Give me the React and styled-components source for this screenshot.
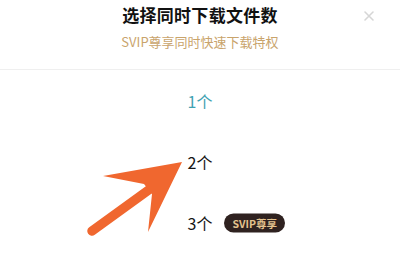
import React from 'react';
import styled, { createGlobalStyle } from 'styled-components';

const GlobalStyle = createGlobalStyle`
  html, body {
    margin: 0;
    padding: 0;
    background: #fff;
  }
  body {
    font-family: "Noto Sans CJK SC", "Noto Sans", sans-serif;
  }
`;

const Sheet = styled.div`
  position: relative;
  width: 400px;
  height: 262px;
  overflow: hidden;
  background: #fff;
`;

const Header = styled.header`
  height: 70px;
  box-sizing: border-box;
  border-bottom: 1px solid #efefef;
  display: flex;
  flex-direction: column;
  align-items: center;
  padding-top: 3px;
  position: relative;
`;

const Title = styled.h1`
  margin: 0;
  font-size: 17px;
  font-weight: 700;
  color: #111;
  line-height: 24px;
  letter-spacing: 0.3px;
`;

const Subtitle = styled.div`
  margin-top: 6px;
  font-size: 13px;
  color: #c9a46c;
  line-height: 18px;
`;

const Close = styled.span`
  position: absolute;
  top: 4px;
  right: 24px;
  width: 14px;
  height: 14px;
  color: #d6d6d6;
`;

const List = styled.ul`
  list-style: none;
  margin: 0;
  padding: 0;
`;

const Row = styled.li`
  height: 61px;
  display: flex;
  align-items: center;
  justify-content: center;
`;

const Count = styled.span`
  position: relative;
  font-size: 16px;
  line-height: 20px;
  color: ${p => (p.$active ? '#3fa2b2' : '#151515')};
`;

const Badge = styled.span`
  position: absolute;
  left: calc(100% + 12px);
  top: 50%;
  transform: translateY(-50%);
  height: 19px;
  padding: 0 8px;
  border-radius: 10px;
  background: #2f2220;
  color: #e4c38e;
  font-size: 10.5px;
  font-weight: 700;
  line-height: 19px;
  white-space: nowrap;
`;

const Arrow = styled.svg`
  position: absolute;
  left: 0;
  top: 0;
  pointer-events: none;
`;

export default function App() {
  const options = [
    { n: 1, active: true },
    { n: 2 },
    { n: 3, vip: true },
  ];
  return (
    <Sheet>
      <GlobalStyle />
      <Header>
        <Title>选择同时下载文件数</Title>
        <Subtitle>SVIP尊享同时快速下载特权</Subtitle>
        <Close>
          <svg width="14" height="14" viewBox="0 0 14 14">
            <path d="M3 3 L11 11 M11 3 L3 11" stroke="currentColor" strokeWidth="1.6" strokeLinecap="round" />
          </svg>
        </Close>
      </Header>
      <List>
        {options.map(o => (
          <Row key={o.n}>
            <Count $active={o.active}>
              {o.n}个
              {o.vip && <Badge>SVIP尊享</Badge>}
            </Count>
          </Row>
        ))}
      </List>
      <Arrow width="400" height="262" viewBox="0 0 400 262">
        <line x1="92" y1="231" x2="150" y2="189" stroke="#f0672f" strokeWidth="9.5" strokeLinecap="round" />
        <polygon points="182,162 103,176 144,184 152,194 148,232" fill="#f0672f" />
      </Arrow>
    </Sheet>
  );
}
